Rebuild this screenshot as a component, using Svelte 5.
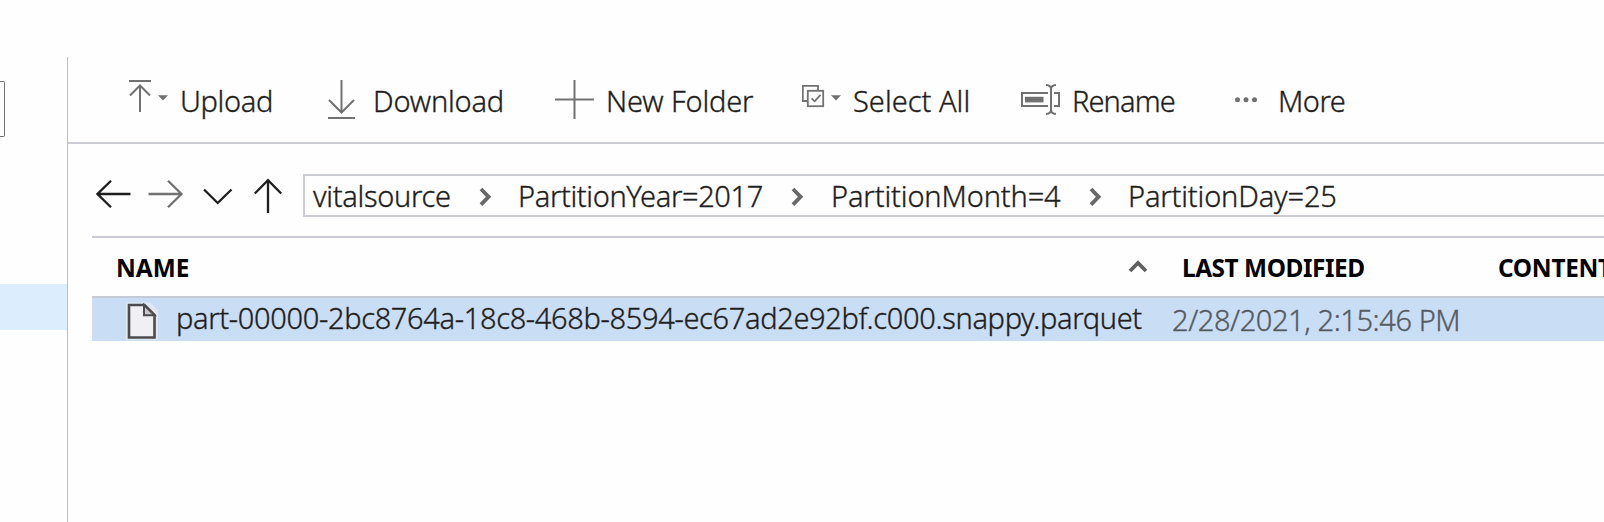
<script>
  const crumbs = [
    { text: 'vitalsource', cls: 'c1' },
    { text: 'PartitionYear=2017', cls: 'c2' },
    { text: 'PartitionMonth=4', cls: 'c3' },
    { text: 'PartitionDay=25', cls: 'c4' }
  ];
</script>

<div class="app">
  <aside class="sidebar">
    <div class="search"></div>
    <div class="selected"></div>
  </aside>
  <main>
    <div class="toolbar">
      <button class="tool">
        <svg width="51" height="44" viewBox="129 76 51 44">
          <g class="line"><path d="M129 81H151M140 85V112M130 95.5L140 85.5L150 95.5" /></g>
          <path class="fill" d="M158 95.3H168L163 100.5Z" />
        </svg>
        <span class="upload">Upload</span>
      </button>
      <button class="tool">
        <svg width="45" height="44" viewBox="328 76 45 44">
          <g class="line"><path d="M328 118H355M341.5 80V113M329 100L341.5 112.5L354 100" /></g>
        </svg>
        <span class="download">Download</span>
      </button>
      <button class="tool">
        <svg width="51" height="44" viewBox="555 76 51 44">
          <g class="line"><path d="M555 99.5H594M574.5 80V119" /></g>
        </svg>
        <span class="folder">New Folder</span>
      </button>
      <button class="tool">
        <svg width="51" height="44" viewBox="802 76 51 44">
          <g class="line thin">
            <path d="M807 101H802.8V85.8H818V90" />
            <rect x="807.8" y="90.8" width="15.4" height="15.4" />
            <path d="M811.5 98.3L814.7 101.3L820.5 94.8" />
          </g>
          <path class="fill" d="M831 95.3H841L836 100.5Z" />
        </svg>
        <span class="select">Select All</span>
      </button>
      <button class="tool">
        <svg width="51" height="44" viewBox="1021 76 51 44">
          <g class="line">
            <path d="M1048 93H1022V106H1048M1054 93H1059V106H1054" />
            <path d="M1046 85Q1051 85.5 1051 89V110Q1051 113.5 1046 114M1056 85Q1051 85.5 1051 89M1051 110Q1051 113.5 1056 114" />
          </g>
          <rect class="fill" x="1025" y="96.8" width="18.5" height="5.6" />
        </svg>
        <span class="rename">Rename</span>
      </button>
      <button class="tool">
        <svg width="43" height="44" viewBox="1235 76 43 44">
          <g class="fill"><circle cx="1237.5" cy="99.7" r="2.5" /><circle cx="1246" cy="99.7" r="2.5" /><circle cx="1254.5" cy="99.7" r="2.5" /></g>
        </svg>
        <span class="more">More</span>
      </button>
    </div>

    <nav class="address">
      <svg width="207" height="44" viewBox="96 174 207 44">
        <g class="nav">
          <path d="M97.5 194H130.5M111 180.8L97.5 194L111 207.2" />
          <path class="dim" d="M148.5 194H181.5M168 180.8L181.5 194L168 207.2" />
          <path d="M204 189.5L217.7 203L231.5 189.5" />
          <path d="M268 180V213M254.8 193.5L268 180.2L281.2 193.5" />
        </g>
      </svg>
      <div class="path">
        {#each crumbs as crumb, i}
          {#if i > 0}
            <svg class="sep" width="14" height="20" viewBox="0 0 14 20"><path d="M2 2L9.6 9.8L2 17.6" /></svg>
          {/if}
          <span class={crumb.cls}>{crumb.text}</span>
        {/each}
      </div>
    </nav>

    <section class="table">
      <div class="row head">
        <div class="cell name">
          <span class="h-name">NAME</span>
          <svg class="sort" width="20" height="16" viewBox="0 0 20 16"><path d="M2 12L10 4L18 12" /></svg>
        </div>
        <div class="cell date"><span class="h-date">LAST MODIFIED</span></div>
        <div class="cell"><span class="h-type">CONTENT</span></div>
      </div>
      <div class="row file">
        <div class="cell name">
          <svg width="32" height="39" viewBox="126 301 32 39">
            <path d="M126 302.5H150L158 310.5V340H126Z" fill="#dfe7f1" />
            <path d="M129 305H144.5L154.5 315V337.5H129Z" fill="#f0eff1" stroke="#4c4c4e" stroke-width="2.6" />
            <path d="M144 305V315.2H154.5Z" fill="#c8c8ca" stroke="#4c4c4e" stroke-width="2" />
          </svg>
          <span class="f-name">part-00000-2bc8764a-18c8-468b-8594-ec67ad2e92bf.c000.snappy.parquet</span>
        </div>
        <div class="cell date"><span class="f-date">2/28/2021, 2:15:46 PM</span></div>
      </div>
    </section>
  </main>
</div>

<style>
  :global(body) { background: #fefefe; overflow: hidden; }
  * { box-sizing: border-box; }
  svg { display: block; flex: none; fill: none; }
  .app {
    display: flex;
    width: 1604px;
    height: 522px;
    padding-top: 57px;
    overflow: hidden;
    background: #fefefe;
    color: #1e1e1e;
    font: 300 29px/40px "Noto Sans", sans-serif;
    -webkit-text-stroke: 0.35px currentColor;
  }
  .sidebar { width: 67px; flex: none; padding-top: 24px; }
  .search { width: 5px; height: 56px; border: 1px solid #717171; border-left: 0; border-radius: 0 2px 2px 0; }
  .selected { height: 46px; margin-top: 147px; background: #dceefe; }
  main { flex: 1; min-width: 0; border-left: 1px solid #bdbdc4; }
  .toolbar {
    display: grid;
    grid-template-columns: 199px 227px 247px 219px 214px 200px;
    height: 87px;
    padding: 19px 0 0 61px;
    border-bottom: 2px solid #cbccd4;
  }
  .tool {
    display: flex;
    align-items: flex-start;
    height: 44px;
    padding: 0;
    border: 0;
    background: none;
    color: inherit;
    font: inherit;
    text-align: left;
  }
  .tool span { padding-top: 5px; }
  span { display: block; flex: none; white-space: nowrap; }
  .line { stroke: #717171; stroke-width: 2; }
  .thin { stroke-width: 1.8; }
  .fill { fill: #717171; }
  .upload { letter-spacing: -0.35px; }
  .download { letter-spacing: -0.2px; }
  .folder { letter-spacing: -0.14px; }
  .select { letter-spacing: 0.02px; }
  .rename { letter-spacing: -0.9px; }
  .more { letter-spacing: -0.5px; }
  .address { display: flex; height: 74px; padding: 30px 0 0 28px; }
  .nav { stroke: #1e1e1e; stroke-width: 2.3; }
  .nav .dim { stroke: #717171; }
  .path {
    display: flex;
    flex: 1;
    height: 43px;
    padding-left: 8px;
    border: 2px solid #cbccd4;
    border-right: 0;
    line-height: 40px;
  }
  .sep { margin-top: 11px; stroke: #686868; stroke-width: 3.8; filter: blur(0.5px); }
  .c1 { width: 166px; letter-spacing: -0.32px; }
  .c2 { width: 273px; letter-spacing: -0.37px; margin-left: 25px; }
  .c3 { width: 258px; letter-spacing: -0.13px; margin-left: 26px; }
  .c4 { letter-spacing: -0.16px; margin-left: 25px; }
  .table { margin: 18px 0 0 24px; border-top: 2px solid #cbccd4; }
  .row { display: grid; grid-template-columns: 1080px 318px 300px; }
  .cell { display: flex; }
  .head { height: 58px; padding-top: 10px; color: #000; font-weight: 700; font-size: 24.4px; -webkit-text-stroke: 0; }
  .head .name { padding-left: 24px; }
  .h-name { width: 1012px; }
  .sort { margin-top: 11px; stroke: #606060; stroke-width: 3.8; filter: blur(0.5px); }
  .h-date { padding-left: 10px; letter-spacing: -0.45px; }
  .h-type { padding-left: 8px; letter-spacing: -0.3px; }
  .file { height: 45px; border-top: 2px solid #c3cad8; background: #c9def5; }
  .file .name { padding: 3px 0 0 34px; }
  .f-name { margin: -3px 0 0 18px; letter-spacing: -0.34px; }
  .f-date { padding-top: 2px; letter-spacing: -0.42px; color: #555b63; }
</style>
